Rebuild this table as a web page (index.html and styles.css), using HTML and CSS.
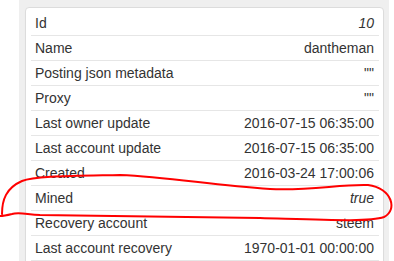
FILE: index.html
```html
<!DOCTYPE html>
<html lang="en">
<head>
    <meta charset="UTF-8">
    <title>Account</title>
    <link rel="stylesheet" href="styles.css">
</head>
<body>
    <div class="page">
        <div class="panel">
            <table class="props">
                <tr><td>Id</td><td class="val"><i>10</i></td></tr>
                <tr><td>Name</td><td class="val">dantheman</td></tr>
                <tr><td>Posting json metadata</td><td class="val">""</td></tr>
                <tr><td>Proxy</td><td class="val">""</td></tr>
                <tr><td>Last owner update</td><td class="val">2016-07-15 06:35:00</td></tr>
                <tr><td>Last account update</td><td class="val">2016-07-15 06:35:00</td></tr>
                <tr><td>Created</td><td class="val">2016-03-24 17:00:06</td></tr>
                <tr><td>Mined</td><td class="val"><i>true</i></td></tr>
                <tr><td>Recovery account</td><td class="val">steem</td></tr>
                <tr><td>Last account recovery</td><td class="val">1970-01-01 00:00:00</td></tr>
            </table>
        </div>
    </div>
    <!-- hand drawn mark around the Mined row -->
    <svg class="mark" width="394" height="261" viewBox="0 0 394 261">
        <path d="M 2 214 C 2 200, 6 188, 22 181 C 34 176, 70 176, 120 175 C 170 177, 210 185, 270 189 C 310 191, 340 184, 368 185 C 392 188, 398 210, 384 217 C 370 222, 330 220, 260 218 C 180 217, 100 216, 40 215 C 25 214, 18 212, 12 214 C 8 215, 4 216, 0 216"
              fill="none" stroke="#f00" stroke-width="2" stroke-linecap="round" stroke-linejoin="round"/>
    </svg>
</body>
</html>
```

FILE: styles.css
```css
html, body{
    margin: 0;
    height: 100%;
    overflow: hidden;
    background: #fff;
}
body{
    font-family: "Liberation Sans", Arial, sans-serif;
    font-size: 14px;
    color: #333;
}
.page{
    margin-left: 19px;
    width: 359px;
    height: 100%;
    padding: 7px 5px 0 6px;
    background: #efefef;
}
.panel{
    background: #fff;
    border: 1px solid #dcdcdc;
    border-radius: 4px;
    padding: 3px 4px 0 5px;
    height: 100%;
    box-shadow: 0 1px 1px rgba(0,0,0,0.04);
}
table.props{
    width: 100%;
    border-collapse: collapse;
}
table.props td{
    padding: 2px 4px 2px 4px;
    line-height: 20px;
    border-bottom: 1px solid #e6e6e6;
    white-space: nowrap;
}
table.props td.val{
    text-align: right;
    padding-right: 5px;
}
.mark{
    position: absolute;
    top: 0;
    left: 0;
    pointer-events: none;
}
```
